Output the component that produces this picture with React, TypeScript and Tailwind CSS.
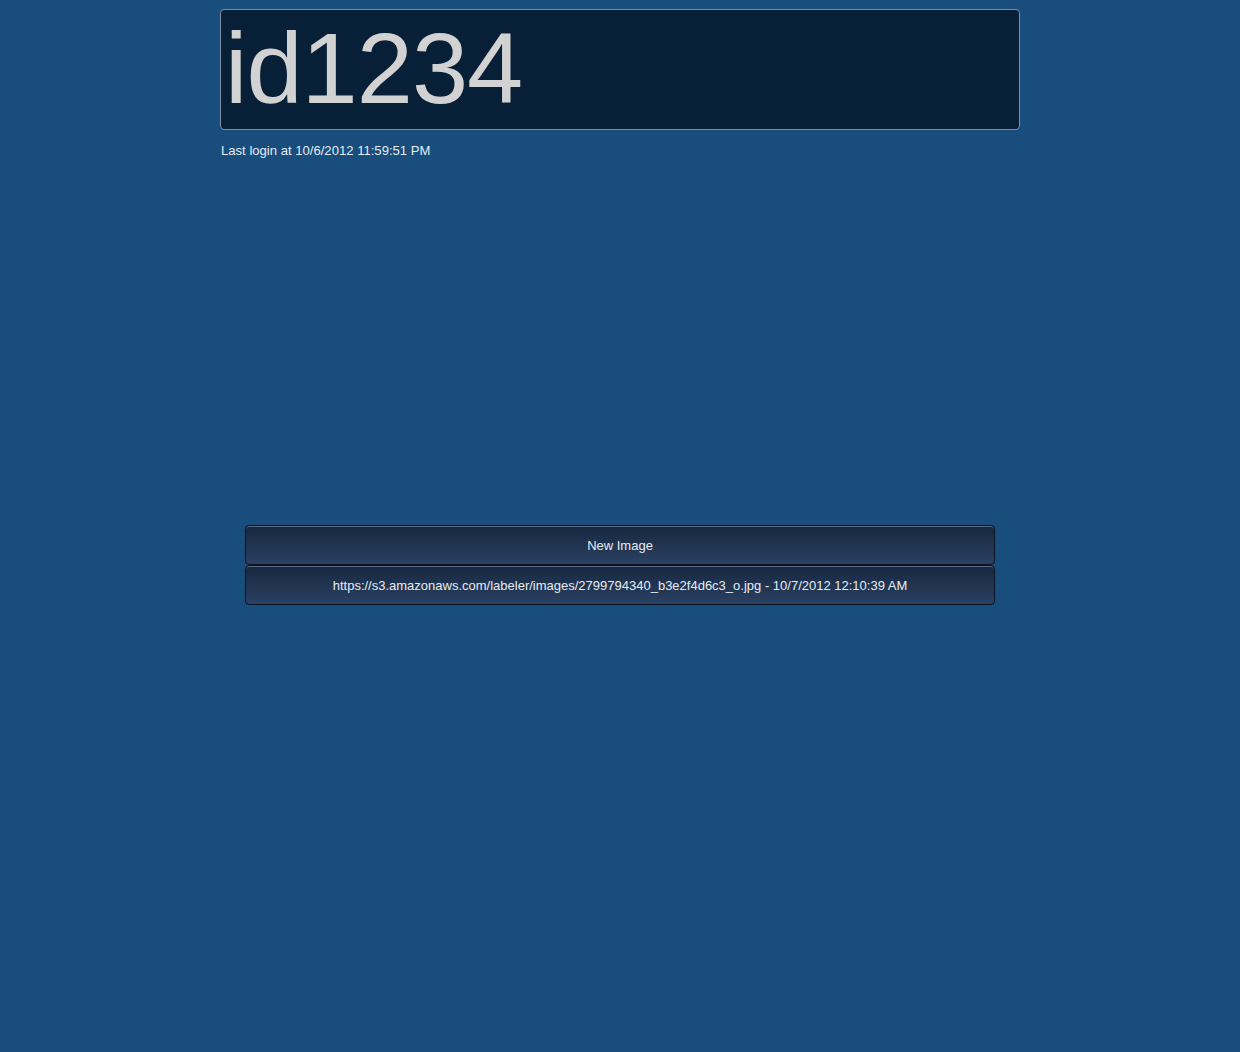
export default function App() {
  const buttons = [
    'New Image',
    'https://s3.amazonaws.com/labeler/images/2799794340_b3e2f4d6c3_o.jpg - 10/7/2012 12:10:39 AM',
  ];

  return (
    <div
      className="min-h-[1052px] bg-[#184d7c] pt-[9px]"
      style={{ fontFamily: '"Liberation Sans", Arial, sans-serif' }}
    >
      <div className="mx-auto w-[800px]">
        {/* user id banner */}
        <div className="h-[121px] rounded-[4px] border border-[#7d8ea6] bg-[#081f38] px-[4px]">
          <h1 className="text-[101px] leading-[116px] tracking-[-1px] text-[#d2d2d2]">id1234</h1>
        </div>
        <p className="mt-[13px] pl-[1px] text-[13.1px] leading-[16px] text-[#e6ecf2]">
          Last login at 10/6/2012 11:59:51 PM
        </p>

        {/* empty image area */}
        <div className="h-[366px]" />

        <div className="mx-auto flex w-[750px] flex-col">
          {buttons.map((label) => (
            <button
              key={label}
              className="h-[40px] w-full rounded-[4px] border border-[#0b1322] bg-gradient-to-b from-[#172840] to-[#2a4162] pt-[1px] text-[13px] text-[#e6ebf0] shadow-[inset_0_1px_0_#5b6a80]"
            >
              {label}
            </button>
          ))}
        </div>
      </div>
    </div>
  );
}
